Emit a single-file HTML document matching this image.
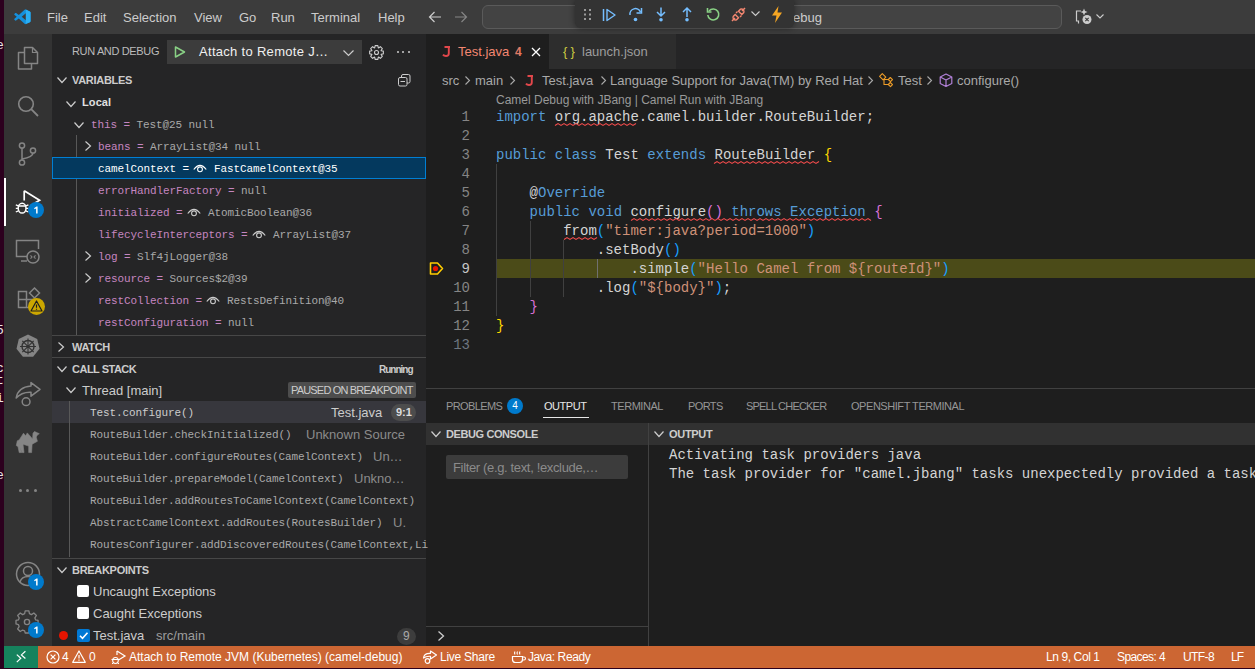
<!DOCTYPE html>
<html><head><meta charset="utf-8">
<style>
*{margin:0;padding:0;box-sizing:border-box}
html,body{width:1255px;height:669px;overflow:hidden;background:#2c001e;font-family:"Liberation Sans",sans-serif;color:#cccccc}
.a{position:absolute;white-space:pre}
svg.a{overflow:visible}
</style></head><body>
<div class="a" style="left:0px;top:0px;width:4px;height:669px;background:#2c001e;"></div>
<div class="a" style="left:4px;top:0px;width:1251px;height:34px;background:#3c3c3c;"></div>
<div class="a" style="left:4px;top:34px;width:48px;height:612px;background:#333333;"></div>
<div class="a" style="left:52px;top:34px;width:374px;height:612px;background:#252526;"></div>
<div class="a" style="left:426px;top:34px;width:829px;height:354px;background:#1e1e1e;"></div>
<div class="a" style="left:426px;top:34px;width:829px;height:35px;background:#252526;"></div>
<div class="a" style="left:426px;top:388px;width:829px;height:258px;background:#1e1e1e;"></div>
<div class="a" style="left:426px;top:388px;width:829px;height:1px;background:#414141;"></div>
<div class="a" style="left:4px;top:646px;width:1251px;height:22px;background:#cc6633;"></div>
<div class="a" style="left:0px;top:668px;width:1255px;height:1px;background:#2c001e;"></div>
<div class="a" style="left:0;top:0;width:4px;height:669px;overflow:hidden">
<div class="a" style="left:-4px;top:36.00px;font-size:13px;color:#e8e8e8;font-family:'Liberation Mono',monospace;line-height:20px">e</div>
<div class="a" style="left:-4px;top:321.00px;font-size:13px;color:#e8e8e8;font-family:'Liberation Mono',monospace;line-height:20px">5</div>
<div class="a" style="left:-4px;top:359.00px;font-size:13px;color:#e8e8e8;font-family:'Liberation Mono',monospace;line-height:20px">c</div>
<div class="a" style="left:-4px;top:371.00px;font-size:13px;color:#e8e8e8;font-family:'Liberation Mono',monospace;line-height:20px">t</div>
<div class="a" style="left:-4px;top:389.00px;font-size:13px;color:#e8e8e8;font-family:'Liberation Mono',monospace;line-height:20px">i</div>
<div class="a" style="left:-4px;top:466.00px;font-size:13px;color:#e8e8e8;font-family:'Liberation Mono',monospace;line-height:20px">e</div>
</div>
<div class="a" style="left:4px;top:646px;width:34px;height:22px;background:#16825d;"></div>
<svg class="a" style="left:13.5px;top:8.5px" width="17" height="17" viewBox="0 0 17 17"><g transform="scale(0.92)"><path d="M12.8 0.6 L17.2 2.7 Q18 3.1 18 4 L18 13 Q18 13.9 17.2 14.3 L12.8 16.4 Q12.1 16.7 11.5 16.1 L5.2 10.4 L2.3 12.6 Q1.8 12.9 1.4 12.6 L0.4 11.7 Q0 11.2 0.4 10.7 L3 8.5 L0.4 6.3 Q0 5.8 0.4 5.3 L1.4 4.4 Q1.8 4.1 2.3 4.4 L5.2 6.6 L11.5 0.9 Q12.1 0.3 12.8 0.6 Z M13.2 4.4 L8.4 8.5 L13.2 12.6 Z" fill="#1590dc" fill-rule="evenodd"/><path d="M12.8 0.6 L17.2 2.7 Q18 3.1 18 4 L18 13 Q18 13.9 17.2 14.3 L12.8 16.4 Z" fill="#2aaef3"/></g></svg>
<div class="a" style="left:47px;top:8.00px;font-size:13px;color:#cccccc;font-family:'Liberation Sans',sans-serif;line-height:20px">File</div>
<div class="a" style="left:84px;top:8.00px;font-size:13px;color:#cccccc;font-family:'Liberation Sans',sans-serif;line-height:20px">Edit</div>
<div class="a" style="left:123px;top:8.00px;font-size:13px;color:#cccccc;font-family:'Liberation Sans',sans-serif;line-height:20px">Selection</div>
<div class="a" style="left:194px;top:8.00px;font-size:13px;color:#cccccc;font-family:'Liberation Sans',sans-serif;line-height:20px">View</div>
<div class="a" style="left:239px;top:8.00px;font-size:13px;color:#cccccc;font-family:'Liberation Sans',sans-serif;line-height:20px">Go</div>
<div class="a" style="left:271px;top:8.00px;font-size:13px;color:#cccccc;font-family:'Liberation Sans',sans-serif;line-height:20px">Run</div>
<div class="a" style="left:311px;top:8.00px;font-size:13px;color:#cccccc;font-family:'Liberation Sans',sans-serif;line-height:20px">Terminal</div>
<div class="a" style="left:378px;top:8.00px;font-size:13px;color:#cccccc;font-family:'Liberation Sans',sans-serif;line-height:20px">Help</div>
<svg class="a" style="left:428px;top:10px" width="14" height="14" viewBox="0 0 14 14"><path d="M13 7 H1.5 M6.5 2 L1.5 7 L6.5 12" stroke="#cccccc" stroke-width="1.2" fill="none"/></svg>
<svg class="a" style="left:454px;top:10px" width="14" height="14" viewBox="0 0 14 14"><path d="M1 7 H12.5 M7.5 2 L12.5 7 L7.5 12" stroke="#858585" stroke-width="1.2" fill="none"/></svg>
<div class="a" style="left:482px;top:5px;width:580px;height:24px;background:#434343;border:1px solid #5a5a5a;border-radius:6px"></div>
<div class="a" style="left:793px;top:8.00px;font-size:13px;color:#cccccc;font-family:'Liberation Sans',sans-serif;line-height:20px">ebug</div>
<div class="a" style="left:575px;top:0px;width:219px;height:28px;background:#333333;border-radius:0 0 6px 6px;box-shadow:0 0 6px rgba(0,0,0,0.45)"></div>
<svg class="a" style="left:584px;top:9px" width="8" height="12" viewBox="0 0 8 12"><rect x="0" y="0" width="2" height="2" fill="#9a9a9a"/><rect x="0" y="4.5" width="2" height="2" fill="#9a9a9a"/><rect x="0" y="9" width="2" height="2" fill="#9a9a9a"/><rect x="5" y="0" width="2" height="2" fill="#9a9a9a"/><rect x="5" y="4.5" width="2" height="2" fill="#9a9a9a"/><rect x="5" y="9" width="2" height="2" fill="#9a9a9a"/></svg>
<svg class="a" style="left:602px;top:8px" width="14" height="14" viewBox="0 0 14 14"><path d="M1.5 1 V13" stroke="#75beff" stroke-width="1.5"/><path d="M5 1.5 L13 7 L5 12.5 Z" stroke="#75beff" stroke-width="1.4" fill="none" stroke-linejoin="round"/></svg>
<svg class="a" style="left:628px;top:7px" width="15" height="15" viewBox="0 0 15 15"><path d="M2 8 A5.5 5.5 0 0 1 12.5 5" stroke="#75beff" stroke-width="1.5" fill="none"/><path d="M13.5 1 V6 H8.5" stroke="#75beff" stroke-width="1.5" fill="none"/><circle cx="7.5" cy="12.5" r="1.8" fill="#75beff"/></svg>
<svg class="a" style="left:654px;top:7px" width="14" height="15" viewBox="0 0 14 15"><path d="M7 0.5 V8.5 M3 5 L7 9 L11 5" stroke="#75beff" stroke-width="1.5" fill="none"/><circle cx="7" cy="12.8" r="1.8" fill="#75beff"/></svg>
<svg class="a" style="left:680px;top:7px" width="14" height="15" viewBox="0 0 14 15"><path d="M7 10 V1.5 M3 5 L7 1 L11 5" stroke="#75beff" stroke-width="1.5" fill="none"/><circle cx="7" cy="12.8" r="1.8" fill="#75beff"/></svg>
<svg class="a" style="left:706px;top:7px" width="14" height="15" viewBox="0 0 14 15"><path d="M3 4 A5.5 5.5 0 1 1 1.8 8" stroke="#89d185" stroke-width="1.6" fill="none"/><path d="M1.5 1 V5 H5.5" stroke="#89d185" stroke-width="1.6" fill="none"/></svg>
<svg class="a" style="left:731px;top:7px" width="15" height="15" viewBox="0 0 15 15"><path d="M1 14 L4 11 M14 1 L11 4" stroke="#f48771" stroke-width="1.5"/><path d="M4.2 7.5 L7.5 10.8 L5.5 12.8 Q4 13.5 2.8 12.3 Q1.5 11 2.2 9.5 Z M10.8 7.5 L7.5 4.2 L9.5 2.2 Q11 1.5 12.2 2.7 Q13.5 4 12.8 5.5 Z" stroke="#f48771" stroke-width="1.4" fill="none"/><path d="M5 6 L6.5 4.5 M9 10 L10.5 8.5" stroke="#f48771" stroke-width="1.4"/></svg>
<svg class="a" style="left:751px;top:11px" width="9" height="6" viewBox="0 0 9 6"><path d="M0.5 0.5 L4.5 4.5 L8.5 0.5" stroke="#cccccc" stroke-width="1.1" fill="none"/></svg>
<svg class="a" style="left:771px;top:6px" width="12" height="17" viewBox="0 0 12 17"><path d="M7.5 0 L1 9.5 H5.5 L4 17 L11 6.5 H6.5 Z" fill="#f5a623"/></svg>
<svg class="a" style="left:1075px;top:8px" width="18" height="17" viewBox="0 0 18 17"><path d="M6 3 H1.5 V13 H3.5 L3.5 15.5" stroke="#cccccc" stroke-width="1.2" fill="none"/><path d="M9 0.5 L10 3 L12.5 4 L10 5 L9 7.5 L8 5 L5.5 4 L8 3 Z" fill="#cccccc"/><circle cx="12" cy="11.5" r="4.5" fill="#cccccc"/><path d="M10.3 9.8 L13.7 13.2 M13.7 9.8 L10.3 13.2" stroke="#3c3c3c" stroke-width="1.1"/></svg>
<svg class="a" style="left:1096px;top:14px" width="8" height="5" viewBox="0 0 8 5"><path d="M0.5 0.5 L4 4 L7.5 0.5" stroke="#cccccc" stroke-width="1.1" fill="none"/></svg>
<svg class="a" style="left:17px;top:46px" width="22" height="25" viewBox="0 0 22 25"><path d="M7.5 1.5 H15.5 L20.5 6.5 V17.5 H7.5 Z" stroke="#858585" stroke-width="1.5" fill="none" stroke-linejoin="round"/><path d="M15.5 1.5 V6.5 H20.5" stroke="#858585" stroke-width="1.2" fill="none"/><path d="M7.5 6.5 H1.5 V23 H14.5 V17.5" stroke="#858585" stroke-width="1.5" fill="none" stroke-linejoin="round"/></svg>
<svg class="a" style="left:17px;top:95px" width="22" height="22" viewBox="0 0 22 22"><circle cx="9" cy="9" r="7.3" stroke="#858585" stroke-width="1.6" fill="none"/><path d="M14.2 14.2 L21 21" stroke="#858585" stroke-width="1.8"/></svg>
<svg class="a" style="left:18px;top:142px" width="19" height="24" viewBox="0 0 19 24"><circle cx="4" cy="3.5" r="2.6" stroke="#858585" stroke-width="1.5" fill="none"/><circle cx="4" cy="20.5" r="2.6" stroke="#858585" stroke-width="1.5" fill="none"/><circle cx="15" cy="8.5" r="2.6" stroke="#858585" stroke-width="1.5" fill="none"/><path d="M4 6 V18 M15 11 Q15 15 4 17" stroke="#858585" stroke-width="1.5" fill="none"/></svg>
<div class="a" style="left:4px;top:178px;width:2px;height:48px;background:#ffffff;"></div>
<svg class="a" style="left:10px;top:184px" width="36" height="36" viewBox="0 0 36 36"><path d="M14.2 6.8 V16.5 M14.2 6.8 L29.6 16.2 L25 19" stroke="#ffffff" stroke-width="1.7" fill="none" stroke-linejoin="miter"/><ellipse cx="12.1" cy="24.2" rx="3.9" ry="4.9" stroke="#ffffff" stroke-width="1.5" fill="none"/><path d="M8.5 22 H15.7 M5.8 20.8 L8.3 21.8 M5.8 24.3 H8.2 M5.8 28 L8.4 26.8 M18.4 20.8 L15.9 21.8 M18.4 24.3 H16 M18.4 28 L15.8 26.8" stroke="#ffffff" stroke-width="1.3" fill="none"/></svg>
<div class="a" style="left:28px;top:202px;width:16px;height:16px;border-radius:50%;background:#007acc"></div>
<svg class="a" style="left:32px;top:206px" width="8" height="8" viewBox="0 0 8 8"><path d="M2.3 1.9 L4.6 0.5 H5.6 V7.5 H4.1 V2.4 L2.3 3.3 Z" fill="#ffffff"/></svg>
<svg class="a" style="left:15px;top:239px" width="26" height="25" viewBox="0 0 26 25"><path d="M13 17.5 H1.5 V1.5 H23.5 V10" stroke="#858585" stroke-width="1.5" fill="none"/><path d="M6 22 H12" stroke="#858585" stroke-width="1.5"/><circle cx="18" cy="18" r="6" stroke="#858585" stroke-width="1.5" fill="#333333"/><path d="M15.5 16.3 L17 18 L15.5 19.7 M20.5 16.3 L19 18 L20.5 19.7" stroke="#858585" stroke-width="1.1" fill="none"/></svg>
<svg class="a" style="left:17px;top:287px" width="24" height="22" viewBox="0 0 24 22"><path d="M1.5 4.5 H9.5 V20.5 H1.5 Z M1.5 12.5 H17 V20.5 H9.5" stroke="#858585" stroke-width="1.5" fill="none"/><path d="M17.5 1 L22.5 6 L17.5 11 L12.5 6 Z" stroke="#858585" stroke-width="1.5" fill="none"/></svg>
<div class="a" style="left:28px;top:298px;width:17px;height:17px;border-radius:50%;background:#cca700"></div>
<svg class="a" style="left:30px;top:300px" width="13" height="12" viewBox="0 0 13 12"><path d="M6.5 1 L12 11 H1 Z" stroke="#1e1e1e" stroke-width="1.2" fill="none" stroke-linejoin="round"/><path d="M6.5 4.5 V7.8 M6.5 8.8 V9.8" stroke="#1e1e1e" stroke-width="1.2"/></svg>
<svg class="a" style="left:16px;top:334px" width="24" height="24" viewBox="0 0 24 24"><path d="M12 0.5 L21.2 4.9 L23.5 14.8 L17.1 22.8 H6.9 L0.5 14.8 L2.8 4.9 Z" fill="#858585"/><circle cx="12" cy="12.5" r="6" stroke="#333333" stroke-width="1.4" fill="none"/><circle cx="12" cy="12.5" r="1.5" fill="#333333"/><path d="M12 4.5 V20.5 M4 12.5 H20 M6.3 6.8 L17.7 18.2 M17.7 6.8 L6.3 18.2" stroke="#333333" stroke-width="1.1"/></svg>
<svg class="a" style="left:12px;top:376px" width="32" height="32" viewBox="0 0 32 32"><path d="M4.2 22 Q6 11 19 10 V6.6 L28 13.3 L19 20.2 V16.2 Q9.5 15.8 4.2 22 Z" stroke="#858585" stroke-width="1.5" fill="none" stroke-linejoin="round"/><circle cx="14.1" cy="25.7" r="3.9" stroke="#858585" stroke-width="1.5" fill="none"/></svg>
<svg class="a" style="left:12px;top:426px" width="32" height="32" viewBox="0 0 32 32"><path d="M7.2 13.9 L11.5 7.2 L13.6 9.8 L15.3 6.9 L20.6 12.9 L21 7.2 L22.5 5.5 L27.3 7.7 L25.4 8.9 L24.2 11 L25.4 15.3 L20.1 18.2 L19.6 26.6 L16.7 26.6 L16.7 20.1 L11 18.2 L12 26.6 L9.5 26.6 L8.5 21 L9.2 26.6 L7.2 26.6 L6 20.6 L4.3 19.6 L5.3 14.8 Z" fill="#858585" stroke="#858585" stroke-width="0.6" stroke-linejoin="round"/></svg>
<div class="a" style="left:18.5px;top:489px;width:3px;height:3px;border-radius:50%;background:#858585"></div>
<div class="a" style="left:26.0px;top:489px;width:3px;height:3px;border-radius:50%;background:#858585"></div>
<div class="a" style="left:33.5px;top:489px;width:3px;height:3px;border-radius:50%;background:#858585"></div>
<svg class="a" style="left:15px;top:561px" width="26" height="26" viewBox="0 0 26 26"><circle cx="13" cy="13" r="11.5" stroke="#858585" stroke-width="1.5" fill="none"/><circle cx="13" cy="10" r="4.5" stroke="#858585" stroke-width="1.5" fill="none"/><path d="M5 21 Q6.5 15.5 13 15.5 Q19.5 15.5 21 21" stroke="#858585" stroke-width="1.5" fill="none"/></svg>
<div class="a" style="left:28px;top:574px;width:16px;height:16px;border-radius:50%;background:#007acc"></div>
<svg class="a" style="left:32px;top:578px" width="8" height="8" viewBox="0 0 8 8"><path d="M2.3 1.9 L4.6 0.5 H5.6 V7.5 H4.1 V2.4 L2.3 3.3 Z" fill="#ffffff"/></svg>
<svg class="a" style="left:16px;top:610px" width="24" height="24" viewBox="0 0 24 24"><path d="M10 1 H14 L14.6 4 L16.8 5 L19.4 3.3 L22.2 6 L20.5 8.6 L21.4 10.8 L24 11.4 V15.2 L21.2 15.8 L20.4 18 L22 20.6 L19.2 23.4 L16.6 21.8 L14.4 22.6 L13.8 25 H10 L9.4 22.6 L7.2 21.8 L4.6 23.4 L1.8 20.6 L3.4 18 L2.6 15.8 L0 15.2 V11.4 L2.6 10.8 L3.5 8.6 L1.8 6 L4.6 3.3 L7.2 5 L9.4 4 Z" stroke="#858585" stroke-width="1.4" fill="none" stroke-linejoin="round" transform="scale(0.92)"/><circle cx="11" cy="12" r="2.6" stroke="#858585" stroke-width="1.4" fill="none"/></svg>
<div class="a" style="left:28px;top:622px;width:16px;height:16px;border-radius:50%;background:#007acc"></div>
<svg class="a" style="left:32px;top:626px" width="8" height="8" viewBox="0 0 8 8"><path d="M2.3 1.9 L4.6 0.5 H5.6 V7.5 H4.1 V2.4 L2.3 3.3 Z" fill="#ffffff"/></svg>
<div class="a" style="left:72px;top:41.00px;font-size:11px;color:#bbbbbb;font-family:'Liberation Sans',sans-serif;line-height:20px;letter-spacing:-0.35px">RUN AND DEBUG</div>
<div class="a" style="left:167px;top:40px;width:195px;height:24px;background:#3c3c3c;"></div>
<svg class="a" style="left:174px;top:46px" width="12" height="12" viewBox="0 0 12 12"><path d="M1.5 1 L10.5 6 L1.5 11 Z" stroke="#89d185" stroke-width="1.5" fill="none" stroke-linejoin="round"/></svg>
<div class="a" style="left:199px;top:42.00px;font-size:13px;color:#f0f0f0;font-family:'Liberation Sans',sans-serif;line-height:20px;letter-spacing:0.3px">Attach to Remote J…</div>
<svg class="a" style="left:343px;top:50px" width="11" height="6" viewBox="0 0 11 6"><path d="M0.5 0.5 L5.5 5.5 L10.5 0.5" stroke="#cccccc" stroke-width="1.2" fill="none"/></svg>
<svg class="a" style="left:369px;top:45px" width="15" height="15" viewBox="0 0 15 15"><path d="M12.16 5.68 L14.37 6.13 L14.37 8.87 L12.16 9.32 L12.08 9.50 L13.32 11.39 L11.39 13.32 L9.50 12.08 L9.32 12.16 L8.87 14.37 L6.13 14.37 L5.68 12.16 L5.50 12.08 L3.61 13.32 L1.68 11.39 L2.92 9.50 L2.84 9.32 L0.63 8.87 L0.63 6.13 L2.84 5.68 L2.92 5.50 L1.68 3.61 L3.61 1.68 L5.50 2.92 L5.68 2.84 L6.13 0.63 L8.87 0.63 L9.32 2.84 L9.50 2.92 L11.39 1.68 L13.32 3.61 L12.08 5.50 Z" stroke="#cccccc" stroke-width="1.1" fill="none" stroke-linejoin="round"/><circle cx="7.5" cy="7.5" r="2" stroke="#cccccc" stroke-width="1.1" fill="none"/></svg>
<div class="a" style="left:396.5px;top:51px;width:2px;height:2px;border-radius:50%;background:#cccccc"></div>
<div class="a" style="left:402px;top:51px;width:2px;height:2px;border-radius:50%;background:#cccccc"></div>
<div class="a" style="left:407.5px;top:51px;width:2px;height:2px;border-radius:50%;background:#cccccc"></div>
<svg class="a" style="left:57px;top:77px" width="10" height="6" viewBox="0 0 10 6"><path d="M0.5 0.5 L5.0 5.5 L9.5 0.5" stroke="#cccccc" stroke-width="1.2" fill="none"/></svg>
<div class="a" style="left:72px;top:70.00px;font-size:11px;color:#cccccc;font-family:'Liberation Sans',sans-serif;line-height:20px;font-weight:bold;letter-spacing:-0.3px">VARIABLES</div>
<svg class="a" style="left:398px;top:74px" width="13" height="13" viewBox="0 0 13 13"><rect x="3.5" y="0.5" width="8.5" height="8.5" rx="1.5" stroke="#cccccc" stroke-width="1" fill="none"/><rect x="0.5" y="3.5" width="8.5" height="8.5" rx="1.5" stroke="#cccccc" stroke-width="1" fill="#252526"/><path d="M2.5 7.5 H7" stroke="#cccccc" stroke-width="1"/></svg>
<svg class="a" style="left:66px;top:101px" width="10" height="6" viewBox="0 0 10 6"><path d="M0.5 0.5 L5.0 5.5 L9.5 0.5" stroke="#cccccc" stroke-width="1.2" fill="none"/></svg>
<div class="a" style="left:82px;top:92.00px;font-size:11px;color:#e0e0e0;font-family:'Liberation Sans',sans-serif;line-height:20px;font-weight:bold;letter-spacing:0.1px">Local</div>
<svg class="a" style="left:74px;top:122px" width="10" height="6" viewBox="0 0 10 6"><path d="M0.5 0.5 L5.0 5.5 L9.5 0.5" stroke="#cccccc" stroke-width="1.2" fill="none"/></svg>
<div class="a" style="left:91px;top:115.00px;font-size:11px;color:#cccccc;font-family:'Liberation Mono',monospace;line-height:20px;letter-spacing:-0.1px"><span style="color:#c586c0">this</span><span style="color:#c586c0"> = </span><span style="color:#a9a9a9">Test@25 null</span></div>
<div class="a" style="left:76px;top:135px;width:1px;height:200px;background:#585858;"></div>
<div class="a" style="left:52px;top:157px;width:374px;height:22px;background:#04395e;border:1px solid #007fd4"></div>
<svg class="a" style="left:85px;top:141px" width="6" height="10" viewBox="0 0 6 10"><path d="M0.5 0.5 L5.5 5.0 L0.5 9.5" stroke="#cccccc" stroke-width="1.2" fill="none"/></svg>
<div class="a" style="left:98px;top:137.00px;font-size:11px;color:#cccccc;font-family:'Liberation Mono',monospace;line-height:20px;letter-spacing:-0.1px"><span style="color:#c586c0">beans</span><span style="color:#c586c0"> = </span><span style="color:#a9a9a9">ArrayList@34 null</span></div>
<div class="a" style="left:98px;top:159.00px;font-size:11px;color:#cccccc;font-family:'Liberation Mono',monospace;line-height:20px;letter-spacing:-0.1px"><span style="color:#ffffff">camelContext</span><span style="color:#ffffff"> = </span></div>
<svg class="a" style="left:193px;top:163px" width="14" height="10" viewBox="0 0 14 10"><path d="M0.8 6.5 Q7 -1.8 13.2 6.5" stroke="#ffffff" stroke-width="1.2" fill="none"/><circle cx="7" cy="6.3" r="2.4" stroke="#ffffff" stroke-width="1.1" fill="none"/></svg>
<div class="a" style="left:214px;top:159.00px;font-size:11px;color:#cccccc;font-family:'Liberation Mono',monospace;line-height:20px;letter-spacing:-0.1px"><span style="color:#ffffff">FastCamelContext@35</span></div>
<div class="a" style="left:98px;top:181.00px;font-size:11px;color:#cccccc;font-family:'Liberation Mono',monospace;line-height:20px;letter-spacing:-0.1px"><span style="color:#c586c0">errorHandlerFactory</span><span style="color:#c586c0"> = </span><span style="color:#a9a9a9">null</span></div>
<div class="a" style="left:98px;top:203.00px;font-size:11px;color:#cccccc;font-family:'Liberation Mono',monospace;line-height:20px;letter-spacing:-0.1px"><span style="color:#c586c0">initialized</span><span style="color:#c586c0"> = </span></div>
<svg class="a" style="left:187px;top:207px" width="14" height="10" viewBox="0 0 14 10"><path d="M0.8 6.5 Q7 -1.8 13.2 6.5" stroke="#cccccc" stroke-width="1.2" fill="none"/><circle cx="7" cy="6.3" r="2.4" stroke="#cccccc" stroke-width="1.1" fill="none"/></svg>
<div class="a" style="left:208px;top:203.00px;font-size:11px;color:#cccccc;font-family:'Liberation Mono',monospace;line-height:20px;letter-spacing:-0.1px"><span style="color:#a9a9a9">AtomicBoolean@36</span></div>
<div class="a" style="left:98px;top:225.00px;font-size:11px;color:#cccccc;font-family:'Liberation Mono',monospace;line-height:20px;letter-spacing:-0.1px"><span style="color:#c586c0">lifecycleInterceptors</span><span style="color:#c586c0"> = </span></div>
<svg class="a" style="left:252px;top:229px" width="14" height="10" viewBox="0 0 14 10"><path d="M0.8 6.5 Q7 -1.8 13.2 6.5" stroke="#cccccc" stroke-width="1.2" fill="none"/><circle cx="7" cy="6.3" r="2.4" stroke="#cccccc" stroke-width="1.1" fill="none"/></svg>
<div class="a" style="left:273px;top:225.00px;font-size:11px;color:#cccccc;font-family:'Liberation Mono',monospace;line-height:20px;letter-spacing:-0.1px"><span style="color:#a9a9a9">ArrayList@37</span></div>
<svg class="a" style="left:85px;top:251px" width="6" height="10" viewBox="0 0 6 10"><path d="M0.5 0.5 L5.5 5.0 L0.5 9.5" stroke="#cccccc" stroke-width="1.2" fill="none"/></svg>
<div class="a" style="left:98px;top:247.00px;font-size:11px;color:#cccccc;font-family:'Liberation Mono',monospace;line-height:20px;letter-spacing:-0.1px"><span style="color:#c586c0">log</span><span style="color:#c586c0"> = </span><span style="color:#a9a9a9">Slf4jLogger@38</span></div>
<svg class="a" style="left:85px;top:273px" width="6" height="10" viewBox="0 0 6 10"><path d="M0.5 0.5 L5.5 5.0 L0.5 9.5" stroke="#cccccc" stroke-width="1.2" fill="none"/></svg>
<div class="a" style="left:98px;top:269.00px;font-size:11px;color:#cccccc;font-family:'Liberation Mono',monospace;line-height:20px;letter-spacing:-0.1px"><span style="color:#c586c0">resource</span><span style="color:#c586c0"> = </span><span style="color:#a9a9a9">Sources$2@39</span></div>
<div class="a" style="left:98px;top:291.00px;font-size:11px;color:#cccccc;font-family:'Liberation Mono',monospace;line-height:20px;letter-spacing:-0.1px"><span style="color:#c586c0">restCollection</span><span style="color:#c586c0"> = </span></div>
<svg class="a" style="left:206px;top:295px" width="14" height="10" viewBox="0 0 14 10"><path d="M0.8 6.5 Q7 -1.8 13.2 6.5" stroke="#cccccc" stroke-width="1.2" fill="none"/><circle cx="7" cy="6.3" r="2.4" stroke="#cccccc" stroke-width="1.1" fill="none"/></svg>
<div class="a" style="left:227px;top:291.00px;font-size:11px;color:#cccccc;font-family:'Liberation Mono',monospace;line-height:20px;letter-spacing:-0.1px"><span style="color:#a9a9a9">RestsDefinition@40</span></div>
<div class="a" style="left:98px;top:313.00px;font-size:11px;color:#cccccc;font-family:'Liberation Mono',monospace;line-height:20px;letter-spacing:-0.1px"><span style="color:#c586c0">restConfiguration</span><span style="color:#c586c0"> = </span><span style="color:#a9a9a9">null</span></div>
<div class="a" style="left:52px;top:335px;width:374px;height:1px;background:#474747;"></div>
<svg class="a" style="left:58px;top:342px" width="6" height="10" viewBox="0 0 6 10"><path d="M0.5 0.5 L5.5 5.0 L0.5 9.5" stroke="#cccccc" stroke-width="1.2" fill="none"/></svg>
<div class="a" style="left:72px;top:337.00px;font-size:11px;color:#cccccc;font-family:'Liberation Sans',sans-serif;line-height:20px;font-weight:bold;letter-spacing:-0.3px">WATCH</div>
<div class="a" style="left:52px;top:357px;width:374px;height:1px;background:#474747;"></div>
<svg class="a" style="left:57px;top:366px" width="10" height="6" viewBox="0 0 10 6"><path d="M0.5 0.5 L5.0 5.5 L9.5 0.5" stroke="#cccccc" stroke-width="1.2" fill="none"/></svg>
<div class="a" style="left:72px;top:359.00px;font-size:11px;color:#cccccc;font-family:'Liberation Sans',sans-serif;line-height:20px;font-weight:bold;letter-spacing:-0.5px">CALL STACK</div>
<div class="a" style="left:379px;top:360.00px;font-size:10px;color:#cccccc;font-family:'Liberation Sans',sans-serif;line-height:20px;font-weight:bold;letter-spacing:-1.0px">Running</div>
<svg class="a" style="left:66px;top:387px" width="10" height="6" viewBox="0 0 10 6"><path d="M0.5 0.5 L5.0 5.5 L9.5 0.5" stroke="#cccccc" stroke-width="1.2" fill="none"/></svg>
<div class="a" style="left:82px;top:381.00px;font-size:13px;color:#cccccc;font-family:'Liberation Sans',sans-serif;line-height:20px">Thread [main]</div>
<div class="a" style="left:288px;top:382px;width:128px;height:16px;background:#4d4d4d;border-radius:2px"></div>
<div class="a" style="left:291px;top:380.00px;font-size:11px;color:#cccccc;font-family:'Liberation Sans',sans-serif;line-height:20px;letter-spacing:-0.82px">PAUSED ON BREAKPOINT</div>
<div class="a" style="left:52px;top:401px;width:374px;height:22px;background:#37373d;"></div>
<div class="a" style="left:69px;top:401px;width:1px;height:156px;background:#585858;"></div>
<div class="a" style="left:90px;top:403.00px;font-size:11px;color:#cccccc;font-family:'Liberation Mono',monospace;line-height:20px;letter-spacing:-0.1px"><span style="color:#cccccc">Test.configure()</span></div>
<div class="a" style="left:331px;top:403.00px;font-size:13px;color:#cccccc;font-family:'Liberation Sans',sans-serif;line-height:20px">Test.java</div>
<div class="a" style="left:391px;top:404px;width:25px;height:17px;background:#4d4d4d;border-radius:9px"></div>
<div class="a" style="left:396px;top:402.00px;font-size:11px;color:#dddddd;font-family:'Liberation Sans',sans-serif;line-height:20px;font-weight:bold">9:1</div>
<div class="a" style="left:90px;top:425.00px;font-size:11px;color:#cccccc;font-family:'Liberation Mono',monospace;line-height:20px;letter-spacing:-0.1px"><span style="color:#a9a9a9">RouteBuilder.checkInitialized()</span></div>
<div class="a" style="left:306px;top:425.00px;font-size:13px;color:#8b8b8b;font-family:'Liberation Sans',sans-serif;line-height:20px">Unknown Source</div>
<div class="a" style="left:90px;top:447.00px;font-size:11px;color:#cccccc;font-family:'Liberation Mono',monospace;line-height:20px;letter-spacing:-0.1px"><span style="color:#a9a9a9">RouteBuilder.configureRoutes(CamelContext)</span></div>
<div class="a" style="left:373px;top:447.00px;font-size:13px;color:#8b8b8b;font-family:'Liberation Sans',sans-serif;line-height:20px">Un…</div>
<div class="a" style="left:90px;top:469.00px;font-size:11px;color:#cccccc;font-family:'Liberation Mono',monospace;line-height:20px;letter-spacing:-0.1px"><span style="color:#a9a9a9">RouteBuilder.prepareModel(CamelContext)</span></div>
<div class="a" style="left:354px;top:469.00px;font-size:13px;color:#8b8b8b;font-family:'Liberation Sans',sans-serif;line-height:20px">Unkno…</div>
<div class="a" style="left:90px;top:491.00px;font-size:11px;color:#cccccc;font-family:'Liberation Mono',monospace;line-height:20px;letter-spacing:-0.1px"><span style="color:#a9a9a9">RouteBuilder.addRoutesToCamelContext(CamelContext)</span></div>
<div class="a" style="left:90px;top:513.00px;font-size:11px;color:#cccccc;font-family:'Liberation Mono',monospace;line-height:20px;letter-spacing:-0.1px"><span style="color:#a9a9a9">AbstractCamelContext.addRoutes(RoutesBuilder)</span></div>
<div class="a" style="left:393px;top:513.00px;font-size:13px;color:#8b8b8b;font-family:'Liberation Sans',sans-serif;line-height:20px">U.</div>
<div class="a" style="left:90px;top:535.00px;font-size:11px;color:#cccccc;font-family:'Liberation Mono',monospace;line-height:20px;letter-spacing:-0.1px"><span style="color:#a9a9a9">RoutesConfigurer.addDiscoveredRoutes(CamelContext,Li</span></div>
<div class="a" style="left:52px;top:558px;width:374px;height:1px;background:#474747;"></div>
<svg class="a" style="left:57px;top:567px" width="10" height="6" viewBox="0 0 10 6"><path d="M0.5 0.5 L5.0 5.5 L9.5 0.5" stroke="#cccccc" stroke-width="1.2" fill="none"/></svg>
<div class="a" style="left:72px;top:560.00px;font-size:11px;color:#cccccc;font-family:'Liberation Sans',sans-serif;line-height:20px;font-weight:bold;letter-spacing:-0.3px">BREAKPOINTS</div>
<div class="a" style="left:77px;top:585px;width:12px;height:12px;background:#ffffff;border-radius:2px"></div>
<div class="a" style="left:93px;top:582.00px;font-size:13px;color:#cccccc;font-family:'Liberation Sans',sans-serif;line-height:20px">Uncaught Exceptions</div>
<div class="a" style="left:77px;top:607px;width:12px;height:12px;background:#ffffff;border-radius:2px"></div>
<div class="a" style="left:93px;top:604.00px;font-size:13px;color:#cccccc;font-family:'Liberation Sans',sans-serif;line-height:20px">Caught Exceptions</div>
<div class="a" style="left:59px;top:631px;width:9px;height:9px;border-radius:50%;background:#e51400"></div>
<div class="a" style="left:77px;top:629px;width:13px;height:13px;background:#0078d4;border-radius:2px"></div>
<svg class="a" style="left:78px;top:630px" width="11" height="11" viewBox="0 0 11 11"><path d="M2 5.8 L4.5 8.3 L9.5 2.8" stroke="#ffffff" stroke-width="1.6" fill="none"/></svg>
<div class="a" style="left:93px;top:626.00px;font-size:13px;color:#cccccc;font-family:'Liberation Sans',sans-serif;line-height:20px">Test.java</div>
<div class="a" style="left:156px;top:626.00px;font-size:13px;color:#9d9d9d;font-family:'Liberation Sans',sans-serif;line-height:20px">src/main</div>
<div class="a" style="left:397px;top:628px;width:19px;height:17px;border-radius:50%;background:#3d3d3d"></div>
<div class="a" style="left:403px;top:626.00px;font-size:12px;color:#aaaaaa;font-family:'Liberation Sans',sans-serif;line-height:20px">9</div>
<div class="a" style="left:426px;top:34px;width:123px;height:35px;background:#1e1e1e;"></div>
<div class="a" style="left:549px;top:34px;width:127px;height:35px;background:#2d2d2d;"></div>
<svg class="a" style="left:442px;top:46px" width="9" height="11" viewBox="0 0 9 11"><path d="M2.5 1 H8 M6.8 1 V7.2 Q6.8 10 4 10 Q2 10 1 8.6" stroke="#e2474b" stroke-width="1.9" fill="none"/></svg>
<div class="a" style="left:458px;top:42.00px;font-size:13px;color:#f48771;font-family:'Liberation Sans',sans-serif;line-height:20px">Test.java</div>
<div class="a" style="left:515px;top:42.00px;font-size:12px;color:#e07a64;font-family:'Liberation Sans',sans-serif;line-height:20px;font-weight:bold">4</div>
<svg class="a" style="left:531px;top:47px" width="10" height="10" viewBox="0 0 10 10"><path d="M1 1 L9 9 M9 1 L1 9" stroke="#ffffff" stroke-width="1.3"/></svg>
<div class="a" style="left:563px;top:42.00px;font-size:13px;color:#cbcb41;font-family:'Liberation Sans',sans-serif;line-height:20px">{</div>
<div class="a" style="left:570.5px;top:42.00px;font-size:13px;color:#cbcb41;font-family:'Liberation Sans',sans-serif;line-height:20px">}</div>
<div class="a" style="left:582px;top:42.00px;font-size:13px;color:#9d9d9d;font-family:'Liberation Sans',sans-serif;line-height:20px">launch.json</div>
<div class="a" style="left:442px;top:71.00px;font-size:13px;color:#a9a9a9;font-family:'Liberation Sans',sans-serif;line-height:20px">src</div>
<svg class="a" style="left:465px;top:76px" width="5" height="9" viewBox="0 0 5 9"><path d="M0.5 0.5 L4.5 4.5 L0.5 8.5" stroke="#a9a9a9" stroke-width="1.1" fill="none"/></svg>
<div class="a" style="left:475px;top:71.00px;font-size:13px;color:#a9a9a9;font-family:'Liberation Sans',sans-serif;line-height:20px">main</div>
<svg class="a" style="left:510px;top:76px" width="5" height="9" viewBox="0 0 5 9"><path d="M0.5 0.5 L4.5 4.5 L0.5 8.5" stroke="#a9a9a9" stroke-width="1.1" fill="none"/></svg>
<svg class="a" style="left:525px;top:75px" width="9" height="11" viewBox="0 0 9 11"><path d="M2.5 1 H8 M6.8 1 V7.2 Q6.8 10 4 10 Q2 10 1 8.6" stroke="#e2474b" stroke-width="1.9" fill="none"/></svg>
<div class="a" style="left:542px;top:71.00px;font-size:13px;color:#a9a9a9;font-family:'Liberation Sans',sans-serif;line-height:20px">Test.java</div>
<svg class="a" style="left:601px;top:76px" width="5" height="9" viewBox="0 0 5 9"><path d="M0.5 0.5 L4.5 4.5 L0.5 8.5" stroke="#a9a9a9" stroke-width="1.1" fill="none"/></svg>
<div class="a" style="left:610px;top:71.00px;font-size:13px;color:#a9a9a9;font-family:'Liberation Sans',sans-serif;line-height:20px">Language Support for Java(TM) by Red Hat</div>
<svg class="a" style="left:868px;top:76px" width="5" height="9" viewBox="0 0 5 9"><path d="M0.5 0.5 L4.5 4.5 L0.5 8.5" stroke="#a9a9a9" stroke-width="1.1" fill="none"/></svg>
<svg class="a" style="left:879px;top:73px" width="15" height="14" viewBox="0 0 15 14"><g stroke="#ee9d28" stroke-width="1.1" fill="none" stroke-linejoin="round"><path d="M0.6 3.3 L3.3 0.6 L6.8 4.1 L4.1 6.8 Z"/><path d="M5 6 V11.5 H9.5 M5.5 6.5 H9.5"/><path d="M9.3 6.5 L11.3 4.5 L13.5 6.7 L11.5 8.7 Z M9.3 11.5 L11.3 9.5 L13.5 11.7 L11.5 13.7 Z"/></g></svg>
<div class="a" style="left:898px;top:71.00px;font-size:13px;color:#a9a9a9;font-family:'Liberation Sans',sans-serif;line-height:20px">Test</div>
<svg class="a" style="left:927px;top:76px" width="5" height="9" viewBox="0 0 5 9"><path d="M0.5 0.5 L4.5 4.5 L0.5 8.5" stroke="#a9a9a9" stroke-width="1.1" fill="none"/></svg>
<svg class="a" style="left:939px;top:73px" width="14" height="14" viewBox="0 0 14 14"><path d="M7 1 L12.8 4 V10.5 L7 13.5 L1.2 10.5 V4 Z M1.2 4 L7 7 L12.8 4 M7 7 V13.5" stroke="#b180d7" stroke-width="1.2" fill="none" stroke-linejoin="round"/></svg>
<div class="a" style="left:957px;top:71.00px;font-size:13px;color:#a9a9a9;font-family:'Liberation Sans',sans-serif;line-height:20px">configure()</div>
<div class="a" style="left:496px;top:90.00px;font-size:12px;color:#999999;font-family:'Liberation Sans',sans-serif;line-height:20px">Camel Debug with JBang | Camel Run with JBang</div>
<div class="a" style="left:461.6px;top:107.00px;font-size:14px;color:#858585;font-family:'Liberation Mono',monospace;line-height:20px">1</div>
<div class="a" style="left:461.6px;top:126.00px;font-size:14px;color:#858585;font-family:'Liberation Mono',monospace;line-height:20px">2</div>
<div class="a" style="left:461.6px;top:145.00px;font-size:14px;color:#858585;font-family:'Liberation Mono',monospace;line-height:20px">3</div>
<div class="a" style="left:461.6px;top:164.00px;font-size:14px;color:#858585;font-family:'Liberation Mono',monospace;line-height:20px">4</div>
<div class="a" style="left:461.6px;top:183.00px;font-size:14px;color:#858585;font-family:'Liberation Mono',monospace;line-height:20px">5</div>
<div class="a" style="left:461.6px;top:202.00px;font-size:14px;color:#858585;font-family:'Liberation Mono',monospace;line-height:20px">6</div>
<div class="a" style="left:461.6px;top:221.00px;font-size:14px;color:#858585;font-family:'Liberation Mono',monospace;line-height:20px">7</div>
<div class="a" style="left:461.6px;top:240.00px;font-size:14px;color:#858585;font-family:'Liberation Mono',monospace;line-height:20px">8</div>
<div class="a" style="left:461.6px;top:259.00px;font-size:14px;color:#c6c6c6;font-family:'Liberation Mono',monospace;line-height:20px">9</div>
<div class="a" style="left:453.2px;top:278.00px;font-size:14px;color:#858585;font-family:'Liberation Mono',monospace;line-height:20px">10</div>
<div class="a" style="left:453.2px;top:297.00px;font-size:14px;color:#858585;font-family:'Liberation Mono',monospace;line-height:20px">11</div>
<div class="a" style="left:453.2px;top:316.00px;font-size:14px;color:#858585;font-family:'Liberation Mono',monospace;line-height:20px">12</div>
<div class="a" style="left:453.2px;top:335.00px;font-size:14px;color:#6e7681;font-family:'Liberation Mono',monospace;line-height:20px">13</div>
<div class="a" style="left:496px;top:259px;width:759px;height:19px;background:#4b4b18;"></div>
<div class="a" style="left:496px;top:164px;width:1px;height:152px;background:#404040;"></div>
<div class="a" style="left:530px;top:221px;width:1px;height:76px;background:#404040;"></div>
<div class="a" style="left:563px;top:240px;width:1px;height:57px;background:#404040;"></div>
<div class="a" style="left:597px;top:259px;width:1px;height:19px;background:#707070;"></div>
<div class="a" style="left:496px;top:107.00px;font-size:14px;color:#d4d4d4;font-family:'Liberation Mono',monospace;line-height:20px"><span style="color:#569cd6">import</span><span style="color:#d4d4d4"> org.apache.camel.builder.RouteBuilder;</span></div>
<div class="a" style="left:496px;top:145.00px;font-size:14px;color:#d4d4d4;font-family:'Liberation Mono',monospace;line-height:20px"><span style="color:#569cd6">public</span><span style="color:#d4d4d4"> </span><span style="color:#569cd6">class</span><span style="color:#d4d4d4"> Test </span><span style="color:#569cd6">extends</span><span style="color:#d4d4d4"> RouteBuilder </span><span style="color:#ffd700">{</span></div>
<div class="a" style="left:529.6px;top:183.00px;font-size:14px;color:#d4d4d4;font-family:'Liberation Mono',monospace;line-height:20px"><span style="color:#d4d4d4">@</span><span style="color:#569cd6">Override</span></div>
<div class="a" style="left:529.6px;top:202.00px;font-size:14px;color:#d4d4d4;font-family:'Liberation Mono',monospace;line-height:20px"><span style="color:#569cd6">public</span><span style="color:#d4d4d4"> </span><span style="color:#569cd6">void</span><span style="color:#d4d4d4"> configure</span><span style="color:#da70d6">()</span><span style="color:#d4d4d4"> </span><span style="color:#569cd6">throws</span><span style="color:#d4d4d4"> </span><span style="color:#569cd6">Exception</span><span style="color:#d4d4d4"> </span><span style="color:#da70d6">{</span></div>
<div class="a" style="left:563.2px;top:221.00px;font-size:14px;color:#d4d4d4;font-family:'Liberation Mono',monospace;line-height:20px"><span style="color:#d4d4d4">from</span><span style="color:#179fff">(</span><span style="color:#ce9178">"timer:java?period=1000"</span><span style="color:#179fff">)</span></div>
<div class="a" style="left:596.8px;top:240.00px;font-size:14px;color:#d4d4d4;font-family:'Liberation Mono',monospace;line-height:20px"><span style="color:#d4d4d4">.setBody</span><span style="color:#179fff">()</span></div>
<div class="a" style="left:630.4px;top:259.00px;font-size:14px;color:#d4d4d4;font-family:'Liberation Mono',monospace;line-height:20px"><span style="color:#d4d4d4">.simple</span><span style="color:#179fff">(</span><span style="color:#ce9178">"Hello Camel from ${routeId}"</span><span style="color:#179fff">)</span></div>
<div class="a" style="left:596.8px;top:278.00px;font-size:14px;color:#d4d4d4;font-family:'Liberation Mono',monospace;line-height:20px"><span style="color:#d4d4d4">.log</span><span style="color:#179fff">(</span><span style="color:#ce9178">"${body}"</span><span style="color:#179fff">)</span><span style="color:#d4d4d4">;</span></div>
<div class="a" style="left:529.6px;top:297.00px;font-size:14px;color:#d4d4d4;font-family:'Liberation Mono',monospace;line-height:20px"><span style="color:#da70d6">}</span></div>
<div class="a" style="left:496px;top:316.00px;font-size:14px;color:#d4d4d4;font-family:'Liberation Mono',monospace;line-height:20px"><span style="color:#ffd700">}</span></div>
<svg class="a" style="left:555px;top:123px" width="82" height="3" viewBox="0 0 82 3"><polyline points="0,2.4 3,0.6 6,2.4 9,0.6 12,2.4 15,0.6 18,2.4 21,0.6 24,2.4 27,0.6 30,2.4 33,0.6 36,2.4 39,0.6 42,2.4 45,0.6 48,2.4 51,0.6 54,2.4 57,0.6 60,2.4 63,0.6 66,2.4 69,0.6 72,2.4 75,0.6 78,2.4 81,0.6" stroke="#f14c4c" stroke-width="1.2" fill="none"/></svg>
<svg class="a" style="left:714px;top:161px" width="105" height="3" viewBox="0 0 105 3"><polyline points="0,2.4 3,0.6 6,2.4 9,0.6 12,2.4 15,0.6 18,2.4 21,0.6 24,2.4 27,0.6 30,2.4 33,0.6 36,2.4 39,0.6 42,2.4 45,0.6 48,2.4 51,0.6 54,2.4 57,0.6 60,2.4 63,0.6 66,2.4 69,0.6 72,2.4 75,0.6 78,2.4 81,0.6 84,2.4 87,0.6 90,2.4 93,0.6 96,2.4 99,0.6 102,2.4 105,0.6" stroke="#f14c4c" stroke-width="1.2" fill="none"/></svg>
<svg class="a" style="left:631px;top:218px" width="242" height="3" viewBox="0 0 242 3"><polyline points="0,2.4 3,0.6 6,2.4 9,0.6 12,2.4 15,0.6 18,2.4 21,0.6 24,2.4 27,0.6 30,2.4 33,0.6 36,2.4 39,0.6 42,2.4 45,0.6 48,2.4 51,0.6 54,2.4 57,0.6 60,2.4 63,0.6 66,2.4 69,0.6 72,2.4 75,0.6 78,2.4 81,0.6 84,2.4 87,0.6 90,2.4 93,0.6 96,2.4 99,0.6 102,2.4 105,0.6 108,2.4 111,0.6 114,2.4 117,0.6 120,2.4 123,0.6 126,2.4 129,0.6 132,2.4 135,0.6 138,2.4 141,0.6 144,2.4 147,0.6 150,2.4 153,0.6 156,2.4 159,0.6 162,2.4 165,0.6 168,2.4 171,0.6 174,2.4 177,0.6 180,2.4 183,0.6 186,2.4 189,0.6 192,2.4 195,0.6 198,2.4 201,0.6 204,2.4 207,0.6 210,2.4 213,0.6 216,2.4 219,0.6 222,2.4 225,0.6 228,2.4 231,0.6 234,2.4 237,0.6 240,2.4" stroke="#f14c4c" stroke-width="1.2" fill="none"/></svg>
<svg class="a" style="left:564px;top:237px" width="34" height="3" viewBox="0 0 34 3"><polyline points="0,2.4 3,0.6 6,2.4 9,0.6 12,2.4 15,0.6 18,2.4 21,0.6 24,2.4 27,0.6 30,2.4 33,0.6" stroke="#f14c4c" stroke-width="1.2" fill="none"/></svg>
<svg class="a" style="left:429px;top:261px" width="15" height="15" viewBox="0 0 15 15"><path d="M1.5 2 H8.5 L13.5 7.5 L8.5 13 H1.5 Z" stroke="#ffcc00" stroke-width="1.6" fill="none" stroke-linejoin="round"/><circle cx="6.5" cy="7.5" r="2.6" fill="#e51400"/></svg>
<div class="a" style="left:426px;top:116px;width:3px;height:0px;background:#1e1e1e;"></div>
<div class="a" style="left:446px;top:396.00px;font-size:11px;color:#969696;font-family:'Liberation Sans',sans-serif;line-height:20px;letter-spacing:-0.6px">PROBLEMS</div>
<div class="a" style="left:507px;top:398px;width:16px;height:16px;border-radius:50%;background:#007acc;color:#fff;font-family:'Liberation Sans',sans-serif;font-size:10px;line-height:16px;text-align:center">4</div>
<div class="a" style="left:544px;top:396.00px;font-size:11px;color:#e7e7e7;font-family:'Liberation Sans',sans-serif;line-height:20px;letter-spacing:-0.45px">OUTPUT</div>
<div class="a" style="left:543px;top:417px;width:46px;height:1px;background:#e7e7e7;"></div>
<div class="a" style="left:611px;top:396.00px;font-size:11px;color:#969696;font-family:'Liberation Sans',sans-serif;line-height:20px;letter-spacing:-0.45px">TERMINAL</div>
<div class="a" style="left:688px;top:396.00px;font-size:11px;color:#969696;font-family:'Liberation Sans',sans-serif;line-height:20px;letter-spacing:-0.6px">PORTS</div>
<div class="a" style="left:746px;top:396.00px;font-size:11px;color:#969696;font-family:'Liberation Sans',sans-serif;line-height:20px;letter-spacing:-0.8px">SPELL CHECKER</div>
<div class="a" style="left:851px;top:396.00px;font-size:11px;color:#969696;font-family:'Liberation Sans',sans-serif;line-height:20px;letter-spacing:-0.45px">OPENSHIFT TERMINAL</div>
<div class="a" style="left:426px;top:423px;width:222px;height:22px;background:#313131;"></div>
<div class="a" style="left:649px;top:423px;width:606px;height:22px;background:#313131;"></div>
<div class="a" style="left:648px;top:423px;width:1px;height:223px;background:#414141;"></div>
<svg class="a" style="left:431px;top:431px" width="10" height="6" viewBox="0 0 10 6"><path d="M0.5 0.5 L5.0 5.5 L9.5 0.5" stroke="#cccccc" stroke-width="1.2" fill="none"/></svg>
<div class="a" style="left:446px;top:424.00px;font-size:11px;color:#cccccc;font-family:'Liberation Sans',sans-serif;line-height:20px;font-weight:bold;letter-spacing:-0.4px">DEBUG CONSOLE</div>
<svg class="a" style="left:654px;top:431px" width="10" height="6" viewBox="0 0 10 6"><path d="M0.5 0.5 L5.0 5.5 L9.5 0.5" stroke="#cccccc" stroke-width="1.2" fill="none"/></svg>
<div class="a" style="left:669px;top:424.00px;font-size:11px;color:#cccccc;font-family:'Liberation Sans',sans-serif;line-height:20px;font-weight:bold;letter-spacing:-0.3px">OUTPUT</div>
<div class="a" style="left:446px;top:455px;width:182px;height:24px;background:#3c3c3c;border-radius:2px"></div>
<div class="a" style="left:453px;top:458.00px;font-size:13px;color:#8b8b8b;font-family:'Liberation Sans',sans-serif;line-height:20px;letter-spacing:-0.35px">Filter (e.g. text, !exclude,…</div>
<div class="a" style="left:426px;top:626px;width:222px;height:1px;background:#414141;"></div>
<svg class="a" style="left:438px;top:631px" width="6" height="10" viewBox="0 0 6 10"><path d="M0.5 0.5 L5.5 5.0 L0.5 9.5" stroke="#cccccc" stroke-width="1.3" fill="none"/></svg>
<div class="a" style="left:669px;top:445.00px;font-size:14px;color:#d4d4d4;font-family:'Liberation Mono',monospace;line-height:20px">Activating task providers java</div>
<div class="a" style="left:669px;top:464.00px;font-size:14px;color:#d4d4d4;font-family:'Liberation Mono',monospace;line-height:20px">The task provider for "camel.jbang" tasks unexpectedly provided a task of type "shell".</div>
<svg class="a" style="left:15px;top:650px" width="15" height="14" viewBox="0 0 15 14"><path d="M1.8 4.6 L5.8 8.3 L1.8 12.1 M10.4 1.3 L6.4 4.9 L10.4 8.5" stroke="#ffffff" stroke-width="1.2" fill="none"/></svg>
<svg class="a" style="left:46px;top:650px" width="14" height="14" viewBox="0 0 14 14"><circle cx="7" cy="7" r="6" stroke="#ffffff" stroke-width="1.2" fill="none"/><path d="M4.6 4.6 L9.4 9.4 M9.4 4.6 L4.6 9.4" stroke="#ffffff" stroke-width="1.2"/></svg>
<div class="a" style="left:62px;top:647.00px;font-size:12px;color:#ffffff;font-family:'Liberation Sans',sans-serif;line-height:20px">4</div>
<svg class="a" style="left:72px;top:650px" width="14" height="13" viewBox="0 0 14 13"><path d="M7 1 L13.3 12.3 H0.7 Z" stroke="#ffffff" stroke-width="1.2" fill="none" stroke-linejoin="round"/><path d="M7 5 V8.6 M7 9.6 V10.8" stroke="#ffffff" stroke-width="1.2"/></svg>
<div class="a" style="left:89px;top:647.00px;font-size:12px;color:#ffffff;font-family:'Liberation Sans',sans-serif;line-height:20px">0</div>
<svg class="a" style="left:111px;top:650px" width="15" height="15" viewBox="0 0 15 15"><path d="M6 1 L14 6 L7.5 10" stroke="#ffffff" stroke-width="1.2" fill="none"/><path d="M6 1 V5" stroke="#ffffff" stroke-width="1.2"/><ellipse cx="4.5" cy="10.5" rx="2.8" ry="3" stroke="#ffffff" stroke-width="1.1" fill="none"/><path d="M0.5 9.5 H8.5 M1 14 L2.5 12.5 M8 14 L6.5 12.5" stroke="#ffffff" stroke-width="1"/></svg>
<div class="a" style="left:129px;top:647.00px;font-size:12px;color:#ffffff;font-family:'Liberation Sans',sans-serif;line-height:20px">Attach to Remote JVM (Kubernetes) (camel-debug)</div>
<svg class="a" style="left:422px;top:650px" width="16" height="14" viewBox="0 0 16 14"><path d="M1.5 8 Q2 3 8.5 3.3 V1 L14.5 5 L8.5 9 V6.3 Q4 6 1.5 8 Z" stroke="#ffffff" stroke-width="1.2" fill="none" stroke-linejoin="round"/><circle cx="5.5" cy="11" r="2.3" stroke="#ffffff" stroke-width="1.2" fill="none"/></svg>
<div class="a" style="left:440px;top:647.00px;font-size:12px;color:#ffffff;font-family:'Liberation Sans',sans-serif;line-height:20px;letter-spacing:-0.25px">Live Share</div>
<svg class="a" style="left:511px;top:650px" width="16" height="14" viewBox="0 0 16 14"><path d="M1.5 6.5 H11.5 V9.5 Q11.5 12.5 8.5 12.5 H4.5 Q1.5 12.5 1.5 9.5 Z" stroke="#ffffff" stroke-width="1.2" fill="none"/><path d="M11.5 7 H13 Q14.5 7 14.5 8.5 Q14.5 10 13 10 H11.5 M4 1.5 Q3 3 4 4.5 M6.5 1.5 Q5.5 3 6.5 4.5 M9 1.5 Q8 3 9 4.5" stroke="#ffffff" stroke-width="1.1" fill="none"/></svg>
<div class="a" style="left:528px;top:647.00px;font-size:12px;color:#ffffff;font-family:'Liberation Sans',sans-serif;line-height:20px;letter-spacing:-0.4px">Java: Ready</div>
<div class="a" style="left:1046px;top:647.00px;font-size:12px;color:#ffffff;font-family:'Liberation Sans',sans-serif;line-height:20px;letter-spacing:-0.4px">Ln 9, Col 1</div>
<div class="a" style="left:1117px;top:647.00px;font-size:12px;color:#ffffff;font-family:'Liberation Sans',sans-serif;line-height:20px;letter-spacing:-0.6px">Spaces: 4</div>
<div class="a" style="left:1183px;top:647.00px;font-size:12px;color:#ffffff;font-family:'Liberation Sans',sans-serif;line-height:20px;letter-spacing:-0.6px">UTF-8</div>
<div class="a" style="left:1231px;top:647.00px;font-size:12px;color:#ffffff;font-family:'Liberation Sans',sans-serif;line-height:20px;letter-spacing:-1px">LF</div>
</body></html>
